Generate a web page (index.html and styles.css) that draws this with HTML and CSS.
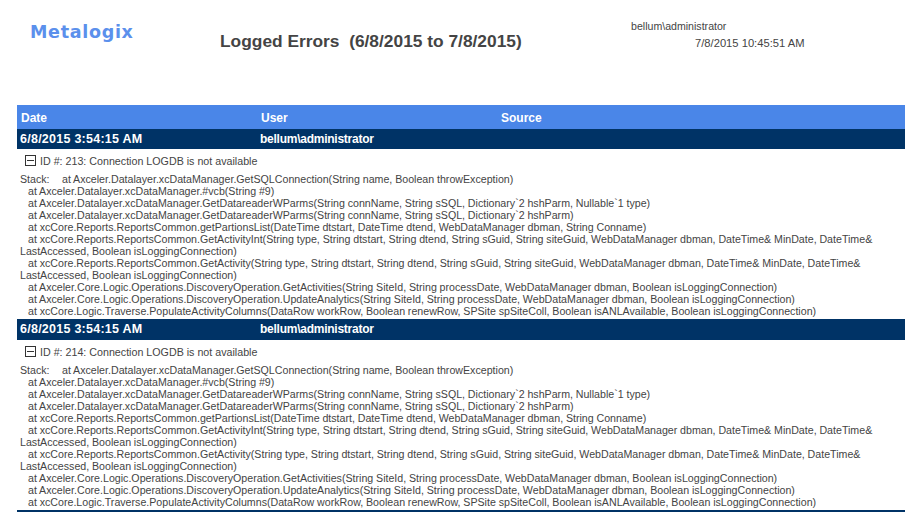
FILE: index.html
```html
<!DOCTYPE html>
<html lang="en">
<head>
<meta charset="utf-8">
<title>Logged Errors</title>
<link rel="stylesheet" href="styles.css">
</head>
<body>
<header class="top">
  <div class="logo">Metalogix</div>
  <h1 class="title">Logged Errors&nbsp; (6/8/2015 to 7/8/2015)</h1>
  <div class="meta">
    <div class="meta-user">bellum\administrator</div>
    <div class="meta-date">7/8/2015 10:45:51 AM</div>
  </div>
</header>
<main class="report">
  <div class="head-row"><span>Date</span><span>User</span><span>Source</span></div>

  <div class="group-row"><span class="group-date">6/8/2015 3:54:15 AM</span><span class="group-user">bellum\administrator</span></div>
  <div class="id-row"><span class="toggle"></span><span>ID #: 213: Connection LOGDB is not available</span></div>
  <div class="stack">
    <div><span class="stack-label">Stack:</span>at Axceler.Datalayer.xcDataManager.GetSQLConnection(String name, Boolean throwException)</div>
    <div class="in">at Axceler.Datalayer.xcDataManager.#vcb(String #9)</div>
    <div class="in">at Axceler.Datalayer.xcDataManager.GetDatareaderWParms(String connName, String sSQL, Dictionary`2 hshParm, Nullable`1 type)</div>
    <div class="in">at Axceler.Datalayer.xcDataManager.GetDatareaderWParms(String connName, String sSQL, Dictionary`2 hshParm)</div>
    <div class="in">at xcCore.Reports.ReportsCommon.getPartionsList(DateTime dtstart, DateTime dtend, WebDataManager dbman, String Conname)</div>
    <div class="in">at xcCore.Reports.ReportsCommon.GetActivityInt(String type, String dtstart, String dtend, String sGuid, String siteGuid, WebDataManager dbman, DateTime&amp; MinDate, DateTime&amp;</div>
    <div>LastAccessed, Boolean isLoggingConnection)</div>
    <div class="in">at xcCore.Reports.ReportsCommon.GetActivity(String type, String dtstart, String dtend, String sGuid, String siteGuid, WebDataManager dbman, DateTime&amp; MinDate, DateTime&amp;</div>
    <div>LastAccessed, Boolean isLoggingConnection)</div>
    <div class="in">at Axceler.Core.Logic.Operations.DiscoveryOperation.GetActivities(String SiteId, String processDate, WebDataManager dbman, Boolean isLoggingConnection)</div>
    <div class="in">at Axceler.Core.Logic.Operations.DiscoveryOperation.UpdateAnalytics(String SiteId, String processDate, WebDataManager dbman, Boolean isLoggingConnection)</div>
    <div class="in">at xcCore.Logic.Traverse.PopulateActivityColumns(DataRow workRow, Boolean renewRow, SPSite spSiteColl, Boolean isANLAvailable, Boolean isLoggingConnection)</div>
  </div>

  <div class="group-row group-row-tall"><span class="group-date">6/8/2015 3:54:15 AM</span><span class="group-user">bellum\administrator</span></div>
  <div class="id-row"><span class="toggle"></span><span>ID #: 214: Connection LOGDB is not available</span></div>
  <div class="stack">
    <div><span class="stack-label">Stack:</span>at Axceler.Datalayer.xcDataManager.GetSQLConnection(String name, Boolean throwException)</div>
    <div class="in">at Axceler.Datalayer.xcDataManager.#vcb(String #9)</div>
    <div class="in">at Axceler.Datalayer.xcDataManager.GetDatareaderWParms(String connName, String sSQL, Dictionary`2 hshParm, Nullable`1 type)</div>
    <div class="in">at Axceler.Datalayer.xcDataManager.GetDatareaderWParms(String connName, String sSQL, Dictionary`2 hshParm)</div>
    <div class="in">at xcCore.Reports.ReportsCommon.getPartionsList(DateTime dtstart, DateTime dtend, WebDataManager dbman, String Conname)</div>
    <div class="in">at xcCore.Reports.ReportsCommon.GetActivityInt(String type, String dtstart, String dtend, String sGuid, String siteGuid, WebDataManager dbman, DateTime&amp; MinDate, DateTime&amp;</div>
    <div>LastAccessed, Boolean isLoggingConnection)</div>
    <div class="in">at xcCore.Reports.ReportsCommon.GetActivity(String type, String dtstart, String dtend, String sGuid, String siteGuid, WebDataManager dbman, DateTime&amp; MinDate, DateTime&amp;</div>
    <div>LastAccessed, Boolean isLoggingConnection)</div>
    <div class="in">at Axceler.Core.Logic.Operations.DiscoveryOperation.GetActivities(String SiteId, String processDate, WebDataManager dbman, Boolean isLoggingConnection)</div>
    <div class="in">at Axceler.Core.Logic.Operations.DiscoveryOperation.UpdateAnalytics(String SiteId, String processDate, WebDataManager dbman, Boolean isLoggingConnection)</div>
    <div class="in">at xcCore.Logic.Traverse.PopulateActivityColumns(DataRow workRow, Boolean renewRow, SPSite spSiteColl, Boolean isANLAvailable, Boolean isLoggingConnection)</div>
  </div>
  <div class="end-rule"></div>
</main>
</body>
</html>
```
FILE: styles.css
```css
* { box-sizing: border-box; }
html, body { margin: 0; padding: 0; background: #fff; overflow: hidden; }
body { width: 908px; height: 512px; font-family: "Liberation Sans", Arial, sans-serif; font-size: 10.65px; word-spacing: -0.15px; color: #444; }

.top { display: flex; height: 105px; word-spacing: 0; }
.logo { width: 190px; padding: 20px 0 0 30px; font-family: "DejaVu Sans", sans-serif; font-weight: 700; font-size: 17.5px; letter-spacing: 0.7px; line-height: 24px; color: #5b90ec; white-space: nowrap; }
.title { width: 411px; margin: 0 0 0 30px; padding-top: 31px; font-size: 17.35px; line-height: 20px; font-weight: 700; color: #444; white-space: nowrap; }
.meta { padding-top: 19px; line-height: 14px; }
.meta-user { font-size: 10.6px; }
.meta-date { margin: 3px 0 0 64px; font-size: 11.2px; }

.report { margin-left: 17px; width: 888px; }
.head-row, .group-row { display: grid; grid-template-columns: 240px 240px 1fr; padding-left: 4px; font-size: 12px; font-weight: 700; color: #fff; word-spacing: 0; }
.head-row { height: 24px; background: #4a86e8; line-height: 26px; }
.group-row { height: 20px; background: #003366; line-height: 21px; padding-left: 3px; }
.group-row-tall { height: 21px; line-height: 20px; }
.group-date { font-size: 12.5px; letter-spacing: 0.25px; }
.group-user { letter-spacing: -0.25px; }
.id-row { display: flex; align-items: center; height: 24px; padding: 0 0 1px 8px; gap: 4px; font-size: 10.7px; word-spacing: 0; }
.toggle { position: relative; width: 11px; height: 11px; border: 1px solid #333; }
.toggle::after { content: ""; position: absolute; left: 1px; right: 1px; top: 4px; height: 1px; background: #333; }
.stack { padding: 0 0 2px 3px; line-height: 12px; white-space: nowrap; }
.in { padding-left: 8px; }
.stack-label { display: inline-block; width: 42px; }
.end-rule { height: 2px; background: #003366; }
```
